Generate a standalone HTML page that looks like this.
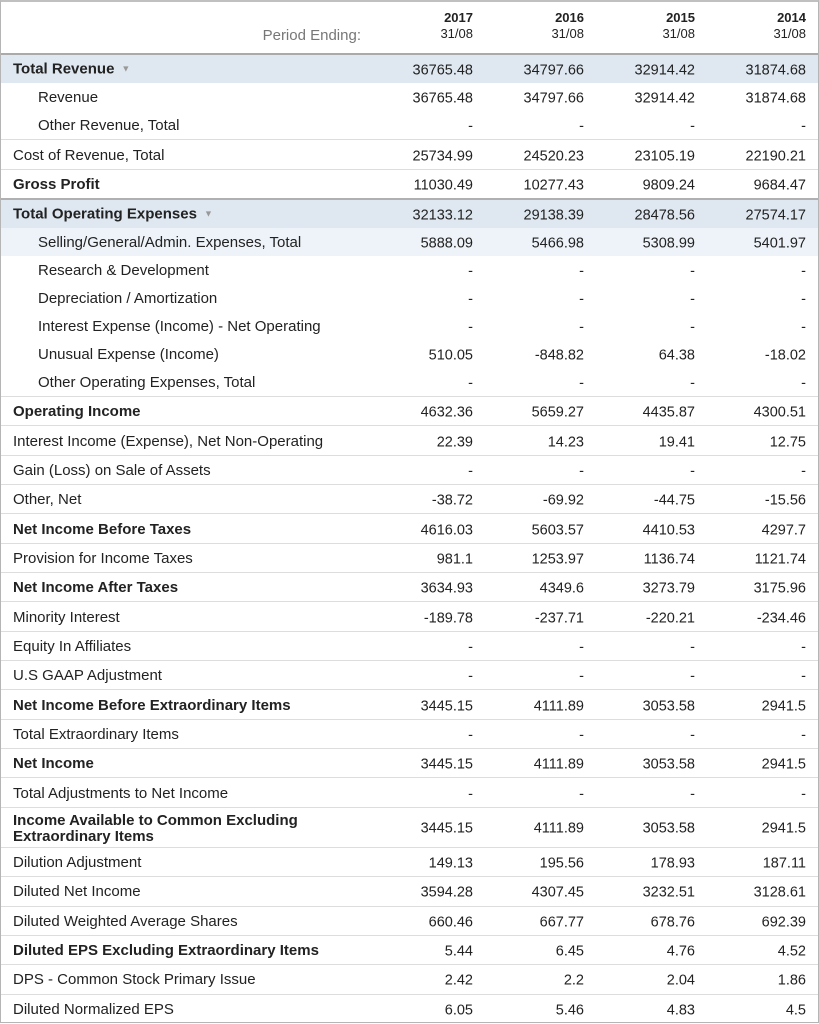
<!DOCTYPE html>
<html><head><meta charset="utf-8"><style>
*{box-sizing:border-box;margin:0;padding:0}
body{width:819px;height:1024px;background:#fff;font-family:"Liberation Sans",Arial,sans-serif;color:#222;overflow:hidden;position:relative}
.wrap{position:absolute;left:0;top:0;width:819px;height:1023px;border:1px solid #b5b5b5;border-top:2px solid #c0c0c0}
.hdr{position:relative;height:53px;border-bottom:2px solid #aaa}
.hdr .pe{position:absolute;right:457px;top:25px;font-size:15px;color:#777}
.hdr .c{position:absolute;top:8px;text-align:right;font-size:13px;line-height:16px}
.hdr .c b{display:block}
.r{position:relative;height:29.35px;border-bottom:1px solid #ddd;font-size:15px}
.r.g{height:28px;border-bottom:none}
.r.gl{border-bottom:1px solid #ddd;height:29px}
.r .l{position:absolute;left:12px;top:50%;transform:translateY(-43%);line-height:16px}
.r.in .l{left:37px}
.r.b .l{font-weight:bold}
.r .n{position:absolute;top:50%;transform:translateY(-42%);font-size:14.5px;text-align:right}
.n1{right:345px}.n2{right:234px}.n3{right:123px}.n4{right:12px}
.c1{right:345px}.c2{right:234px}.c3{right:123px}.c4{right:12px}
.bg1{background:#dfe8f1}.bg2{background:#edf3f9}
.dark{border-bottom:2px solid #b0b0b0 !important}
.ar{color:#999;font-size:9px;font-weight:normal;margin-left:7px;position:relative;top:-2px}
</style></head><body><div class="wrap">
<div class="hdr"><div class="pe">Period Ending:</div>
<div class="c c1"><b>2017</b>31/08</div><div class="c c2"><b>2016</b>31/08</div><div class="c c3"><b>2015</b>31/08</div><div class="c c4"><b>2014</b>31/08</div></div>

<div class="r g b bg1"><div class="l">Total Revenue<span class="ar">&#9660;</span></div><div class="n n1">36765.48</div><div class="n n2">34797.66</div><div class="n n3">32914.42</div><div class="n n4">31874.68</div></div>
<div class="r g in"><div class="l">Revenue</div><div class="n n1">36765.48</div><div class="n n2">34797.66</div><div class="n n3">32914.42</div><div class="n n4">31874.68</div></div>
<div class="r g in gl"><div class="l">Other Revenue, Total</div><div class="n n1">-</div><div class="n n2">-</div><div class="n n3">-</div><div class="n n4">-</div></div>
<div class="r gl" style="height:30px"><div class="l">Cost of Revenue, Total</div><div class="n n1">25734.99</div><div class="n n2">24520.23</div><div class="n n3">23105.19</div><div class="n n4">22190.21</div></div>
<div class="r b dark" style="height:30px"><div class="l">Gross Profit</div><div class="n n1">11030.49</div><div class="n n2">10277.43</div><div class="n n3">9809.24</div><div class="n n4">9684.47</div></div>
<div class="r g b bg1"><div class="l">Total Operating Expenses<span class="ar">&#9660;</span></div><div class="n n1">32133.12</div><div class="n n2">29138.39</div><div class="n n3">28478.56</div><div class="n n4">27574.17</div></div>
<div class="r g in bg2"><div class="l">Selling/General/Admin. Expenses, Total</div><div class="n n1">5888.09</div><div class="n n2">5466.98</div><div class="n n3">5308.99</div><div class="n n4">5401.97</div></div>
<div class="r g in"><div class="l">Research &amp; Development</div><div class="n n1">-</div><div class="n n2">-</div><div class="n n3">-</div><div class="n n4">-</div></div>
<div class="r g in"><div class="l">Depreciation / Amortization</div><div class="n n1">-</div><div class="n n2">-</div><div class="n n3">-</div><div class="n n4">-</div></div>
<div class="r g in"><div class="l">Interest Expense (Income) - Net Operating</div><div class="n n1">-</div><div class="n n2">-</div><div class="n n3">-</div><div class="n n4">-</div></div>
<div class="r g in"><div class="l">Unusual Expense (Income)</div><div class="n n1">510.05</div><div class="n n2">-848.82</div><div class="n n3">64.38</div><div class="n n4">-18.02</div></div>
<div class="r g in gl"><div class="l">Other Operating Expenses, Total</div><div class="n n1">-</div><div class="n n2">-</div><div class="n n3">-</div><div class="n n4">-</div></div>

<div class="r b"><div class="l">Operating Income</div><div class="n n1">4632.36</div><div class="n n2">5659.27</div><div class="n n3">4435.87</div><div class="n n4">4300.51</div></div>
<div class="r"><div class="l">Interest Income (Expense), Net Non-Operating</div><div class="n n1">22.39</div><div class="n n2">14.23</div><div class="n n3">19.41</div><div class="n n4">12.75</div></div>
<div class="r"><div class="l">Gain (Loss) on Sale of Assets</div><div class="n n1">-</div><div class="n n2">-</div><div class="n n3">-</div><div class="n n4">-</div></div>
<div class="r"><div class="l">Other, Net</div><div class="n n1">-38.72</div><div class="n n2">-69.92</div><div class="n n3">-44.75</div><div class="n n4">-15.56</div></div>
<div class="r b"><div class="l">Net Income Before Taxes</div><div class="n n1">4616.03</div><div class="n n2">5603.57</div><div class="n n3">4410.53</div><div class="n n4">4297.7</div></div>
<div class="r"><div class="l">Provision for Income Taxes</div><div class="n n1">981.1</div><div class="n n2">1253.97</div><div class="n n3">1136.74</div><div class="n n4">1121.74</div></div>
<div class="r b"><div class="l">Net Income After Taxes</div><div class="n n1">3634.93</div><div class="n n2">4349.6</div><div class="n n3">3273.79</div><div class="n n4">3175.96</div></div>
<div class="r"><div class="l">Minority Interest</div><div class="n n1">-189.78</div><div class="n n2">-237.71</div><div class="n n3">-220.21</div><div class="n n4">-234.46</div></div>
<div class="r"><div class="l">Equity In Affiliates</div><div class="n n1">-</div><div class="n n2">-</div><div class="n n3">-</div><div class="n n4">-</div></div>
<div class="r"><div class="l">U.S GAAP Adjustment</div><div class="n n1">-</div><div class="n n2">-</div><div class="n n3">-</div><div class="n n4">-</div></div>
<div class="r b"><div class="l">Net Income Before Extraordinary Items</div><div class="n n1">3445.15</div><div class="n n2">4111.89</div><div class="n n3">3053.58</div><div class="n n4">2941.5</div></div>
<div class="r"><div class="l">Total Extraordinary Items</div><div class="n n1">-</div><div class="n n2">-</div><div class="n n3">-</div><div class="n n4">-</div></div>
<div class="r b"><div class="l">Net Income</div><div class="n n1">3445.15</div><div class="n n2">4111.89</div><div class="n n3">3053.58</div><div class="n n4">2941.5</div></div>
<div class="r"><div class="l">Total Adjustments to Net Income</div><div class="n n1">-</div><div class="n n2">-</div><div class="n n3">-</div><div class="n n4">-</div></div>
<div class="r b" style="height:40px"><div class="l">Income Available to Common Excluding<br>Extraordinary Items</div><div class="n n1">3445.15</div><div class="n n2">4111.89</div><div class="n n3">3053.58</div><div class="n n4">2941.5</div></div>
<div class="r"><div class="l">Dilution Adjustment</div><div class="n n1">149.13</div><div class="n n2">195.56</div><div class="n n3">178.93</div><div class="n n4">187.11</div></div>
<div class="r"><div class="l">Diluted Net Income</div><div class="n n1">3594.28</div><div class="n n2">4307.45</div><div class="n n3">3232.51</div><div class="n n4">3128.61</div></div>
<div class="r"><div class="l">Diluted Weighted Average Shares</div><div class="n n1">660.46</div><div class="n n2">667.77</div><div class="n n3">678.76</div><div class="n n4">692.39</div></div>
<div class="r b"><div class="l">Diluted EPS Excluding Extraordinary Items</div><div class="n n1">5.44</div><div class="n n2">6.45</div><div class="n n3">4.76</div><div class="n n4">4.52</div></div>
<div class="r"><div class="l">DPS - Common Stock Primary Issue</div><div class="n n1">2.42</div><div class="n n2">2.2</div><div class="n n3">2.04</div><div class="n n4">1.86</div></div>
<div class="r" style="border-bottom:none"><div class="l">Diluted Normalized EPS</div><div class="n n1">6.05</div><div class="n n2">5.46</div><div class="n n3">4.83</div><div class="n n4">4.5</div></div>
</div></body></html>
